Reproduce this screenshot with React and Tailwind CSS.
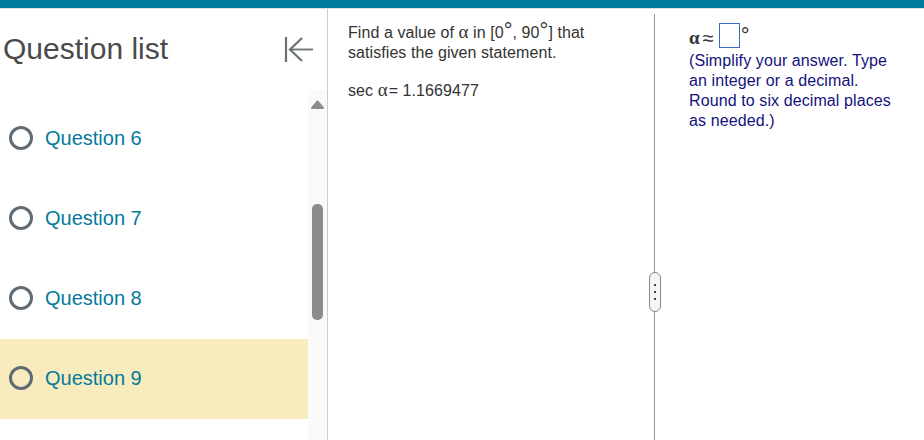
const questions = [
  { id: 6, current: false },
  { id: 7, current: false },
  { id: 8, current: false },
  { id: 9, current: true },
];

function CollapseIcon() {
  return (
    <svg width="30" height="26" viewBox="0 0 30 26" fill="none" stroke="#6b7272" strokeWidth="2.2">
      <path d="M2 0v25" />
      <path d="M29 12.5H6" strokeWidth="1.8" />
      <path d="M18 1L6 12.5 18 24" />
    </svg>
  );
}

function ScrollUpIcon() {
  return (
    <svg width="13" height="9" viewBox="0 0 13 9" fill="#8c8c8c" stroke="#8c8c8c" strokeWidth="2" strokeLinejoin="round">
      <path d="M6.5 1.5L12 8H1z" />
    </svg>
  );
}

function QuestionRow({ id, current }) {
  return (
    <div className={`flex h-20 items-center pb-[2px] pl-[9px] ${current ? 'bg-[#f8ebbd]' : ''}`}>
      <span className="h-6 w-6 rounded-full border-[3px] border-[#5f6b75]" />
      <span className="ml-3 text-[20px] text-[#047a9c]">Question {id}</span>
    </div>
  );
}

function Sidebar() {
  return (
    <aside className="flex w-[328px] shrink-0 flex-col border-r border-[#c9ccd3]">
      <div className="flex h-[81px] shrink-0 items-start justify-between pl-[3px] pr-[13px] pt-[20px]">
        <h2 className="text-[30px] leading-[40px] font-normal text-[#4a4a4a]">Question list</h2>
        <div className="pt-[8px]">
          <CollapseIcon />
        </div>
      </div>
      <div className="flex min-h-0 flex-1">
        <div className="w-[308px] pt-[9px]">
          {questions.map((q) => (
            <QuestionRow key={q.id} {...q} />
          ))}
        </div>
        <div className="flex w-[19px] flex-col items-center bg-[#fafafa] pt-[10px]">
          <ScrollUpIcon />
          <span className="mt-[95px] h-[116px] w-[11px] rounded-[5px] bg-[#8c8c8c]" />
        </div>
      </div>
    </aside>
  );
}

function Problem() {
  return (
    <section className="relative w-[327px] shrink-0 pt-[5px]">
      <div className="h-full border-r border-[#8a94a6] pl-5 pr-[60px] pt-[9px] text-base leading-5 tracking-[0.07px] text-[#333]">
        <p>
          <span className="block">
            Find a value of <span className="font-['Liberation_Serif',serif] text-[19px] leading-[0]">α</span> in [0
            <span className="text-[22px] leading-[0]">°</span>, 90<span className="text-[22px] leading-[0]">°</span>] that
          </span>
          <span className="block">satisfies the given statement.</span>
        </p>
        <p className="mt-[17px] pt-px">
          sec <span className="font-['Liberation_Serif',serif] text-[19px] leading-[0]">α</span>
          <span className="ml-px">= 1.1669477</span>
        </p>
      </div>
      <div className="absolute right-[-6px] top-[263px] flex h-10 w-[12px] flex-col items-center justify-center gap-[5px] rounded-[6px] border border-[#7f8794] bg-[#f4f5f7]">
        <span className="h-[2px] w-[2px] bg-[#444]" />
        <span className="h-[2px] w-[2px] bg-[#444]" />
        <span className="h-[2px] w-[2px] bg-[#444]" />
      </div>
    </section>
  );
}

function Answer() {
  return (
    <section className="flex-1 pl-[34px] pr-6 pt-[14px] text-base leading-5 tracking-[0.1px] text-[#12127c]">
      <div className="flex h-[26px] items-start text-[#333]">
        <span className="mt-[5px] font-['Liberation_Serif',serif] text-[19px] font-bold">α</span>
        <span className="ml-[3px] mt-[5px] text-[20px]">≈</span>
        <span className="ml-[5px] h-[25px] w-[21px] border border-[#3a6bc4] bg-white" />
        <span className="ml-px mt-[3px] text-[22px] leading-[20px]">°</span>
      </div>
      <p className="mt-[2px]">
        <span className="block">(Simplify your answer. Type</span>
        <span className="block">an integer or a decimal.</span>
        <span className="block">Round to six decimal places</span>
        <span className="block">as needed.)</span>
      </p>
    </section>
  );
}

export default function App() {
  return (
    <div className="flex h-[440px] w-[924px] flex-col overflow-hidden bg-white font-['Liberation_Sans',Arial,sans-serif]">
      <div className="h-2 shrink-0 bg-[#007a9c]" />
      <div className="h-px shrink-0 bg-[#dcdfe3]" />
      <main className="flex min-h-0 flex-1">
        <Sidebar />
        <Problem />
        <Answer />
      </main>
    </div>
  );
}
